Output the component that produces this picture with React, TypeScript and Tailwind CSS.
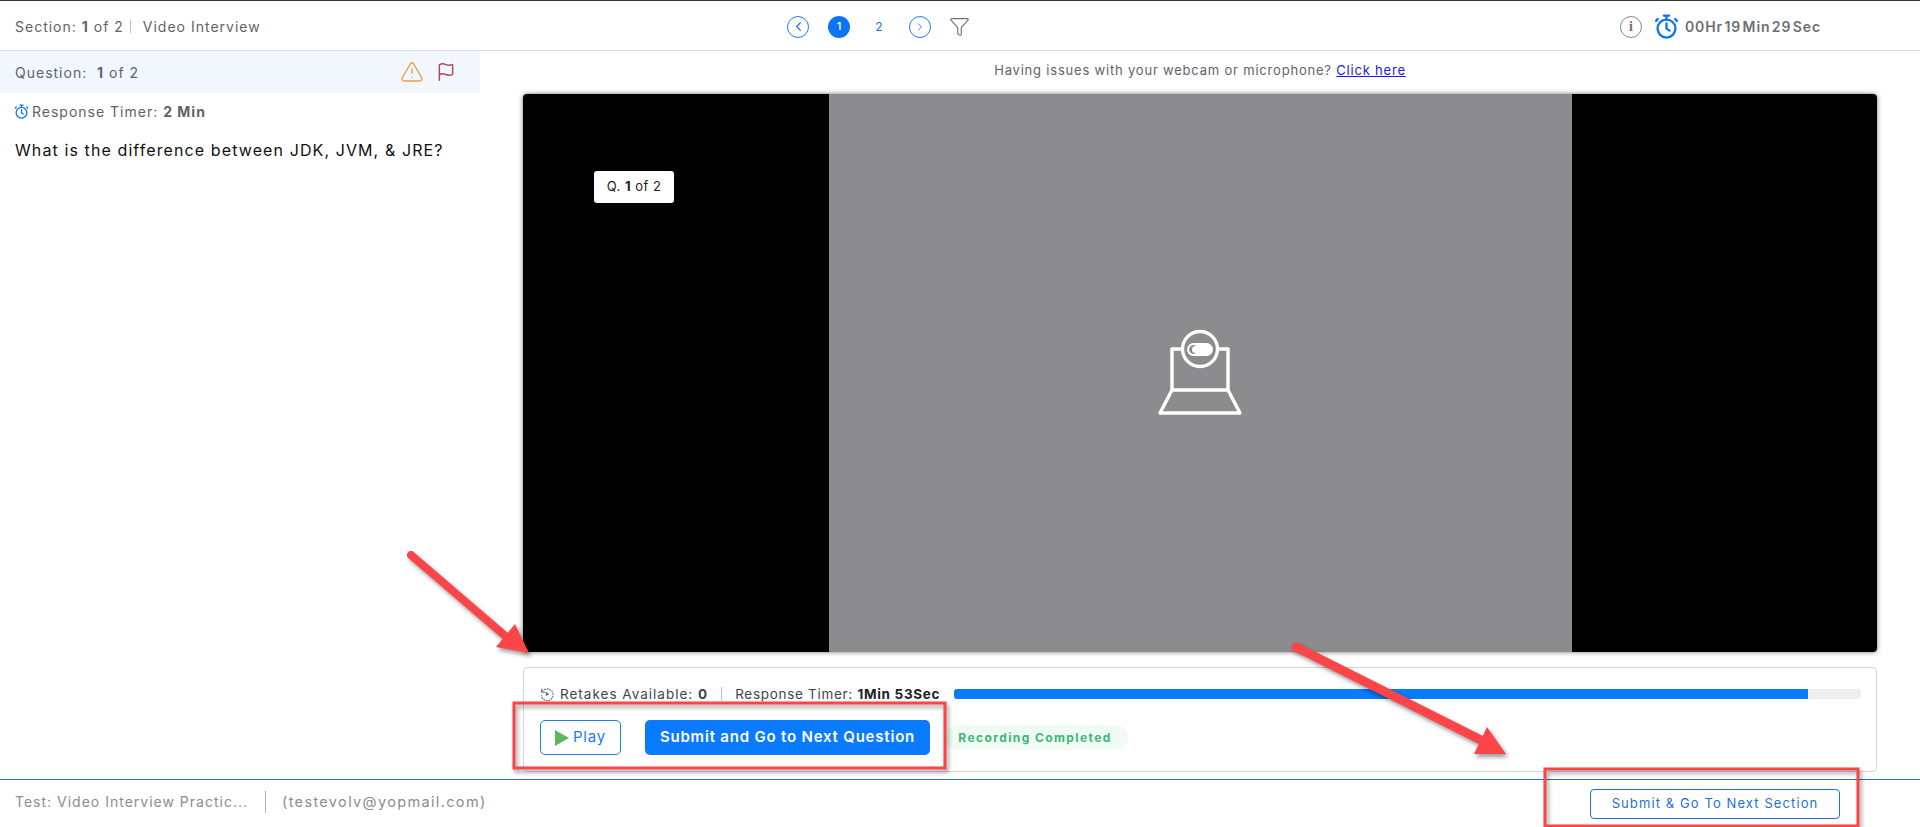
import { ChevronLeft, ChevronRight, Flag, Funnel, TriangleAlert } from "lucide-react";

const RED = "#fb4548";

function Annotations() {
  return (
    <svg
      className="absolute inset-0 pointer-events-none drop-shadow-[2px_3px_2px_rgba(0,0,0,0.4)]"
      width="1920"
      height="827"
      viewBox="0 0 1920 827"
      fill="none"
    >
      <rect x="514" y="703" width="431" height="65" stroke={RED} strokeWidth="3" />
      <rect x="1545" y="769" width="313" height="57" stroke={RED} strokeWidth="3" />
      <line x1="411" y1="555" x2="510" y2="640" stroke={RED} strokeWidth="8" strokeLinecap="round" />
      <polygon points="529,653 515,624 496,647" fill={RED} />
      <line x1="1296" y1="647" x2="1483" y2="741" stroke={RED} strokeWidth="9" strokeLinecap="round" />
      <polygon points="1506,754 1487,727 1474,754" fill={RED} />
    </svg>
  );
}

function CameraOff() {
  return (
    <svg width="90" height="90" viewBox="0 0 90 90" fill="none" stroke="#fff" strokeWidth="3.4" strokeLinejoin="round">
      <path d="M28 21H17V62H73V21H62" />
      <path d="M17 62L5 85H85L73 62" />
      <circle cx="45" cy="21" r="17.5" />
      <rect x="32" y="15" width="26" height="13" rx="6.5" fill="#fff" stroke="none" />
      <circle cx="38.5" cy="21.5" r="4.4" fill="#8c8c8e" stroke="none" />
      <circle cx="40.6" cy="21.5" r="3.6" fill="#fff" stroke="none" />
    </svg>
  );
}

function RetakeIcon() {
  return (
    <svg width="14" height="14" viewBox="0 0 24 24" fill="none" stroke="#6b6b6b" strokeWidth="2">
      <path d="M4 8a10 10 0 1 1-1.5 6" strokeDasharray="3 1.5" />
      <path d="M3 3v6h6" />
      <path d="M10 8l6 4-6 4z" fill="#6b6b6b" stroke="none" />
    </svg>
  );
}

// stopwatch with the two little ears, lucide's Timer has none
function Stopwatch({ size, stroke }: { size: number; stroke: number }) {
  return (
    <svg width={size} height={size} viewBox="0 0 24 24" fill="none" stroke="#0a74f5" strokeWidth={stroke} strokeLinecap="round">
      <circle cx="12" cy="14" r="8.6" />
      <path d="M9.5 1.6h5M12 1.6v3.6M3.6 4.8L2 6.6M20.4 4.8L22 6.6" />
      <path d="M12 9v5l3 2" />
    </svg>
  );
}

export default function App() {
  return (
    <div className="relative h-[827px] w-[1920px] overflow-hidden bg-white font-['Inter',sans-serif] text-[14px] tracking-[1px] text-[#5f6368]">
      {/* Top bar */}
      <header className="grid h-[51px] grid-cols-3 items-center border-t-[1px] border-b border-t-[#333] border-b-[#dcdce8] pl-[15px] pr-[99px] pt-[2px]">
        <div className="flex items-center whitespace-nowrap">
          <span>
            Section: <b className="font-bold">1</b> of 2
          </span>
          <span className="ml-[6px] mr-[12px] h-[13px] w-px bg-[#b8c4d8]" />
          <span>Video Interview</span>
        </div>
        <div className="flex h-full items-center justify-start text-[#1f6fe0]">
          <div className="ml-[170px] flex items-center tracking-normal">
            <span className="flex h-[22px] w-[22px] items-center justify-center rounded-full border border-[#1f7cf0]">
              <ChevronLeft size={15} strokeWidth={1.8} />
            </span>
            <span className="ml-[19px] flex h-[22px] w-[22px] items-center justify-center rounded-full bg-[#0a74f5] text-[11px] font-medium text-white">
              1
            </span>
            <span className="ml-[18px] flex h-[22px] w-[22px] items-center justify-center text-[12px]">2</span>
            <span className="ml-[19px] flex h-[22px] w-[22px] items-center justify-center rounded-full border border-[#1f7cf0]">
              <ChevronRight size={12} strokeWidth={1.8} />
            </span>
            <Funnel size={21} strokeWidth={1.3} className="ml-[18px] text-[#6f7275]" />
          </div>
        </div>
        <div className="flex items-center justify-end">
          <span className="flex h-[22px] w-[22px] items-center justify-center rounded-full border border-[#85888c]">
            <span className="font-['Liberation_Serif',serif] text-[14px] font-bold leading-none tracking-normal text-[#7a6d66]">i</span>
          </span>
          <span className="ml-[12px] flex">
            <Stopwatch size={25} stroke={2.2} />
          </span>
          <span className="ml-[6px] whitespace-nowrap text-[14px] font-semibold tracking-[0.9px] text-[#6c7076] [word-spacing:-3px]">
            00Hr 19 Min 29 Sec
          </span>
        </div>
      </header>

      <div className="flex h-[728px]">
        {/* Question column */}
        <aside className="w-[480px] shrink-0">
          <div className="flex h-[42px] items-center justify-between bg-[#f2f7fd] pl-[15px] pr-[24px]">
            <span>
              Question:&nbsp; <b className="font-bold">1</b> of 2
            </span>
            <span className="flex items-center gap-[12px]">
              <TriangleAlert size={24} strokeWidth={1.4} className="text-[#e6a04a]" />
              <Flag size={20} strokeWidth={1.8} className="text-[#b5485c]" />
            </span>
          </div>
          <div className="mt-[8px] flex items-center pl-[14px]">
            <Stopwatch size={15} stroke={2} />
            <span className="ml-[3px]">
              Response Timer: <b className="font-bold">2 Min</b>
            </span>
          </div>
          <p className="mt-[16px] pl-[15px] text-[16px] tracking-[1.1px] text-[#111]">What is the difference between JDK, JVM, &amp; JRE?</p>
        </aside>

        {/* Video column */}
        <main className="w-[1440px] pl-[43px] pr-[43px]">
          <p className="flex h-[43px] items-center justify-center pb-[4px] text-[13px] tracking-[0.8px]">
            Having issues with your webcam or microphone?&nbsp;
            <a className="text-[#1a1ae0] underline">Click here</a>
          </p>
          <div className="relative flex h-[558px] overflow-hidden rounded-[4px] bg-black shadow-[0_0_5px_rgba(0,0,0,0.55)]">
            <div className="flex-1" />
            <div className="flex w-[743px] items-center justify-center bg-[#8c8c8e]">
              <CameraOff />
            </div>
            <div className="flex-1" />
            <span className="absolute left-[71px] top-[77px] flex h-[32px] w-[80px] items-center justify-center rounded-[3px] bg-white text-[13px] tracking-[0.5px] text-[#222]">
              Q.&nbsp;<b className="font-bold">1</b>&nbsp;of 2
            </span>
          </div>

          {/* Recording panel */}
          <div className="mt-[15px] h-[105px] rounded-[4px] border border-[#d4d4d4] pl-[16px] pr-[15px] pt-[16px]">
            <div className="flex h-[20px] items-center">
              <RetakeIcon />
              <span className="ml-[6px] whitespace-nowrap text-[13.5px] tracking-[1px] text-[#444]">
                Retakes Available: <b className="font-bold">0</b>
              </span>
              <span className="ml-[13px] h-[14px] w-px bg-[#c4c4c4]" />
              <span className="ml-[13px] whitespace-nowrap text-[13.5px] tracking-[0.7px] text-[#444]">
                Response Timer: <b className="font-bold text-[#222]">1Min 53Sec</b>
              </span>
              <div className="ml-[14px] h-[10px] flex-1 overflow-hidden rounded-[3px] bg-[#efefef]">
                <div className="h-full w-[94.2%] bg-[#0a7aff]" />
              </div>
            </div>
            <div className="mt-[16px] flex items-center">
              <button className="flex h-[35px] w-[81px] items-center justify-center gap-[4px] rounded-[5px] border border-[#1f7cf0] text-[15px] tracking-[0.8px] text-[#1f7cf0]">
                <svg width="14" height="16" viewBox="0 0 14 16">
                  <polygon points="0,0 14,8 0,16" fill="#5cb85c" />
                </svg>
                Play
              </button>
              <button className="ml-[24px] h-[35px] w-[285px] rounded-[5px] bg-[#0a7aff] text-[15px] font-semibold tracking-[0.8px] text-white">
                Submit and Go to Next Question
              </button>
              <span className="ml-[15px] flex h-[25px] w-[183px] items-center justify-center rounded-full bg-[#effbf3] pr-[3px] text-[12px] font-bold tracking-[1.4px] text-[#3cb878]">
                Recording Completed
              </span>
            </div>
          </div>
        </main>
      </div>

      {/* Footer */}
      <footer className="flex h-[48px] items-center border-t border-t-[#1f6fe0] pl-[15px] pr-[80px]">
        <span className="-mt-[4px] w-[235px] whitespace-nowrap text-[#8a8d91]">Test: Video Interview Practic...</span>
        <span className="-mt-[4px] ml-[15px] h-[22px] w-px bg-[#b0b0b0]" />
        <span className="-mt-[4px] ml-[16px] text-[14.5px] tracking-[1.35px] text-[#8a8d91]">(testevolv@yopmail.com)</span>
        <button className="ml-auto h-[30px] w-[250px] rounded-[4px] border border-[#1f6fe0] text-[13px] tracking-[1.1px] text-[#1f6fe0]">
          Submit &amp; Go To Next Section
        </button>
      </footer>

      <Annotations />
    </div>
  );
}
